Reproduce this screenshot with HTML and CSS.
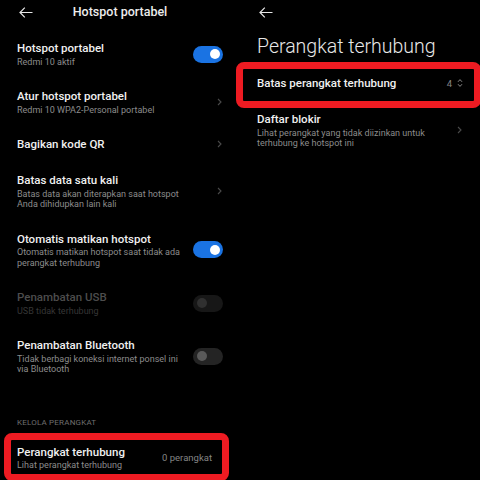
FILE: index.html
```html
<!DOCTYPE html>
<html lang="id">
<head>
<meta charset="utf-8">
<title>Hotspot portabel</title>
<link rel="stylesheet" href="styles.css">
</head>
<body>
<div class="stage">
  <section class="panel">
    <header class="bar">
      <svg class="back" viewBox="0 0 14 11"><path d="M13.5 5.5H1 M5.8 0.7L1 5.5L5.8 10.3" fill="none" stroke="#e6e6e6" stroke-width="1.2"/></svg>
      <h1 class="bar-title">Hotspot portabel</h1>
      <span></span>
    </header>
    <div class="list">
      <div class="row">
        <div class="text"><div class="title">Hotspot portabel</div><div class="sub">Redmi 10 aktif</div></div>
        <span class="switch on"></span>
      </div>
      <div class="row">
        <div class="text"><div class="title">Atur hotspot portabel</div><div class="sub">Redmi 10 WPA2-Personal portabel</div></div>
        <svg class="chev" viewBox="0 0 5 8"><path d="M1 1l3 3-3 3" fill="none" stroke="#4a4a4a" stroke-width="1.1"/></svg>
      </div>
      <div class="row">
        <div class="text"><div class="title">Bagikan kode QR</div></div>
        <svg class="chev" viewBox="0 0 5 8"><path d="M1 1l3 3-3 3" fill="none" stroke="#4a4a4a" stroke-width="1.1"/></svg>
      </div>
      <div class="row">
        <div class="text"><div class="title">Batas data satu kali</div><div class="sub">Batas data akan diterapkan saat hotspot<br>Anda dihidupkan lain kali</div></div>
        <svg class="chev" viewBox="0 0 5 8"><path d="M1 1l3 3-3 3" fill="none" stroke="#4a4a4a" stroke-width="1.1"/></svg>
      </div>
      <div class="row">
        <div class="text"><div class="title">Otomatis matikan hotspot</div><div class="sub">Otomatis matikan hotspot saat tidak ada<br>perangkat terhubung</div></div>
        <span class="switch on"></span>
      </div>
      <div class="row is-disabled">
        <div class="text"><div class="title">Penambatan USB</div><div class="sub">USB tidak terhubung</div></div>
        <span class="switch disabled"></span>
      </div>
      <div class="row">
        <div class="text"><div class="title">Penambatan Bluetooth</div><div class="sub">Tidak berbagi koneksi internet ponsel ini<br>via Bluetooth</div></div>
        <span class="switch off"></span>
      </div>
    </div>
    <div class="section-label">KELOLA PERANGKAT</div>
    <div class="row">
      <div class="text"><div class="title">Perangkat terhubung</div><div class="sub">Lihat perangkat terhubung</div></div>
      <span class="value value-left">0 perangkat</span>
    </div>
  </section>

  <section class="panel">
    <header class="bar">
      <svg class="back" viewBox="0 0 14 11"><path d="M13.5 5.5H1 M5.8 0.7L1 5.5L5.8 10.3" fill="none" stroke="#e6e6e6" stroke-width="1.2"/></svg>
      <span></span>
      <span></span>
    </header>
    <h2 class="big-title">Perangkat terhubung</h2>
    <div class="row">
      <div class="text"><div class="title">Batas perangkat terhubung</div></div>
      <span class="value">4</span>
      <svg class="updown" viewBox="0 0 6 10"><path d="M1 3.8L3 1.6L5 3.8 M1 6.2L3 8.4L5 6.2" fill="none" stroke="#8a8a8a" stroke-width="1"/></svg>
    </div>
    <div class="row">
      <div class="text"><div class="title">Daftar blokir</div><div class="sub">Lihat perangkat yang tidak diizinkan untuk<br>terhubung ke hotspot ini</div></div>
      <svg class="chev" viewBox="0 0 5 8"><path d="M1 1l3 3-3 3" fill="none" stroke="#4a4a4a" stroke-width="1.1"/></svg>
    </div>
  </section>

  <div class="mark mark-left"></div>
  <div class="mark mark-right"></div>
</div>
</body>
</html>
```

FILE: styles.css
```css
html, body {
  margin: 0;
  background: #000;
}

body {
  font-family: Roboto, "Noto Sans", sans-serif;
  color: #ededed;
}

.stage {
  position: relative;
  width: 480px;
  height: 480px;
  overflow: hidden;
  display: flex;
}

.panel {
  width: 240px;
  flex: none;
  box-sizing: border-box;
  padding: 0 17px;
}

.bar {
  height: 24px;
  display: grid;
  grid-template-columns: 1fr auto 1fr;
  align-items: center;
}

.back {
  width: 14px;
  height: 11px;
  margin-left: 2px;
  display: block;
}

.bar-title {
  margin: 0;
  font-size: 12.5px;
  font-weight: 500;
  line-height: 16px;
  color: #ececec;
}

.list {
  padding-top: 6px;
}

.row {
  display: flex;
  align-items: center;
  padding: 11px 0;
}

.text {
  flex: 1;
  min-width: 0;
}

.title {
  font-size: 11.5px;
  font-weight: 500;
  line-height: 14px;
  white-space: nowrap;
  color: #f0f0f0;
}

.sub {
  margin-top: 1.5px;
  font-size: 9px;
  line-height: 10.5px;
  color: #8c8c8c;
  white-space: nowrap;
}

.is-disabled .title {
  color: #4d4d4d;
}

.is-disabled .sub {
  color: #363636;
}

.switch {
  position: relative;
  flex: none;
  width: 30px;
  height: 17px;
  border-radius: 9px;
  background: #1a73e3;
}

.switch::after {
  content: "";
  position: absolute;
  top: 3.5px;
  right: 3px;
  width: 10px;
  height: 10px;
  border-radius: 50%;
  background: #fff;
}

.switch.off {
  background: #242424;
}

.switch.off::after {
  right: auto;
  left: 4px;
  background: #5a5a5a;
}

.switch.disabled {
  background: #171717;
}

.switch.disabled::after {
  right: auto;
  left: 4px;
  background: #303030;
}

.chev {
  flex: none;
  width: 5px;
  height: 8px;
  margin-right: 1px;
  display: block;
}

.section-label {
  padding: 32px 0 6px;
  font-size: 8px;
  line-height: 10px;
  letter-spacing: 0.2px;
  color: #6e6e6e;
}

.value {
  flex: none;
  font-size: 9.5px;
  color: #858585;
}

.value-left {
  margin-right: 11px;
}

.big-title {
  margin: 10px 0 5px;
  font-size: 19.5px;
  font-weight: 300;
  line-height: 26px;
  color: #e8e8e8;
}

.updown {
  flex: none;
  width: 6px;
  height: 10px;
  margin-left: 5px;
  display: block;
}

.mark {
  position: absolute;
  box-sizing: border-box;
  border: 7px solid #ee1b22;
  border-radius: 8px;
}

.mark-left {
  left: 4px;
  top: 433px;
  width: 225px;
  height: 48px;
}

.mark-right {
  left: 236px;
  top: 62px;
  width: 245px;
  height: 46px;
}
```
